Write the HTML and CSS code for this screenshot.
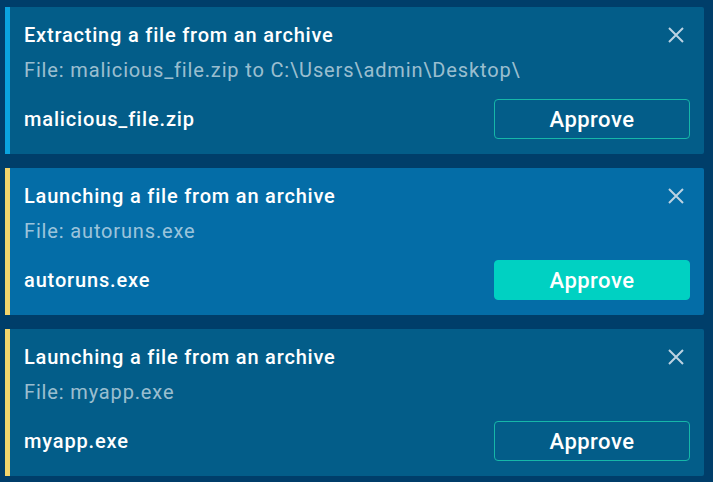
FILE: index.html
```html
<!DOCTYPE html>
<html lang="en">
<head>
    <meta charset="UTF-8">
    <meta name="viewport" content="width=device-width, initial-scale=1.0">
    <title>Archive notifications</title>
    <link rel="stylesheet" href="styles.css">
</head>
<body>
    <div class="list">
        <div class="card info">
            <div class="card-head">
                <div class="title">Extracting a file from an archive</div>
                <button class="close" aria-label="Close">
                    <svg width="16" height="16" viewBox="0 0 16 16"><path d="M1 1L15 15M15 1L1 15" stroke="currentColor" stroke-width="2" fill="none"/></svg>
                </button>
            </div>
            <div class="subtitle">File: malicious_file.zip to C:\Users\admin\Desktop\</div>
            <div class="card-foot">
                <div class="filename">malicious_file.zip</div>
                <button class="approve">Approve</button>
            </div>
        </div>

        <div class="card warn active">
            <div class="card-head">
                <div class="title">Launching a file from an archive</div>
                <button class="close" aria-label="Close">
                    <svg width="16" height="16" viewBox="0 0 16 16"><path d="M1 1L15 15M15 1L1 15" stroke="currentColor" stroke-width="2" fill="none"/></svg>
                </button>
            </div>
            <div class="subtitle">File: autoruns.exe</div>
            <div class="card-foot">
                <div class="filename">autoruns.exe</div>
                <button class="approve">Approve</button>
            </div>
        </div>

        <div class="card warn">
            <div class="card-head">
                <div class="title">Launching a file from an archive</div>
                <button class="close" aria-label="Close">
                    <svg width="16" height="16" viewBox="0 0 16 16"><path d="M1 1L15 15M15 1L1 15" stroke="currentColor" stroke-width="2" fill="none"/></svg>
                </button>
            </div>
            <div class="subtitle">File: myapp.exe</div>
            <div class="card-foot">
                <div class="filename">myapp.exe</div>
                <button class="approve">Approve</button>
            </div>
        </div>
    </div>
</body>
</html>
```

FILE: styles.css
```css
* {
    margin: 0;
    padding: 0;
    box-sizing: border-box;
    font-family: Roboto, "Liberation Sans", sans-serif;
}

body {
    background-color: #003e6a;
    color: white;
    overflow: hidden;
}

.list {
    display: flex;
    flex-direction: column;
    gap: 14px;
    padding: 7px 9px 6px 5px;
}

.card {
    height: 147px;
    background-color: #035d89;
    border-left: 5px solid #0aa3df;
    border-radius: 0 2px 2px 0;
    padding: 16px 14px 15px 14px;
}

.card.warn {
    border-left-color: #f3d46c;
}

.card.active {
    background-color: #046da7;
}

.card-head {
    display: flex;
    justify-content: space-between;
    align-items: center;
    height: 24px;
}

.title {
    font-size: 20px;
    font-weight: 500;
    line-height: 24px;
    letter-spacing: 0.8px;
}

.close {
    border: none;
    background: none;
    color: #bcd2e2;
    width: 16px;
    height: 16px;
    margin-right: 6px;
    display: flex;
    cursor: pointer;
}

.subtitle {
    margin-top: 11px;
    font-size: 20px;
    line-height: 24px;
    letter-spacing: 0.85px;
    color: rgba(255, 255, 255, 0.62);
}

.card-foot {
    margin-top: 17px;
    display: flex;
    justify-content: space-between;
    align-items: center;
}

.filename {
    font-size: 20px;
    font-weight: 500;
    line-height: 24px;
    letter-spacing: 0.85px;
}

.approve {
    width: 196px;
    height: 40px;
    border: 1px solid #16b7a9;
    border-radius: 4px;
    background: transparent;
    color: white;
    font-size: 22px;
    font-weight: 500;
    letter-spacing: 0.5px;
    cursor: pointer;
}

.card.active .approve {
    background-color: #00d1c2;
    border-color: #00d1c2;
}
```
